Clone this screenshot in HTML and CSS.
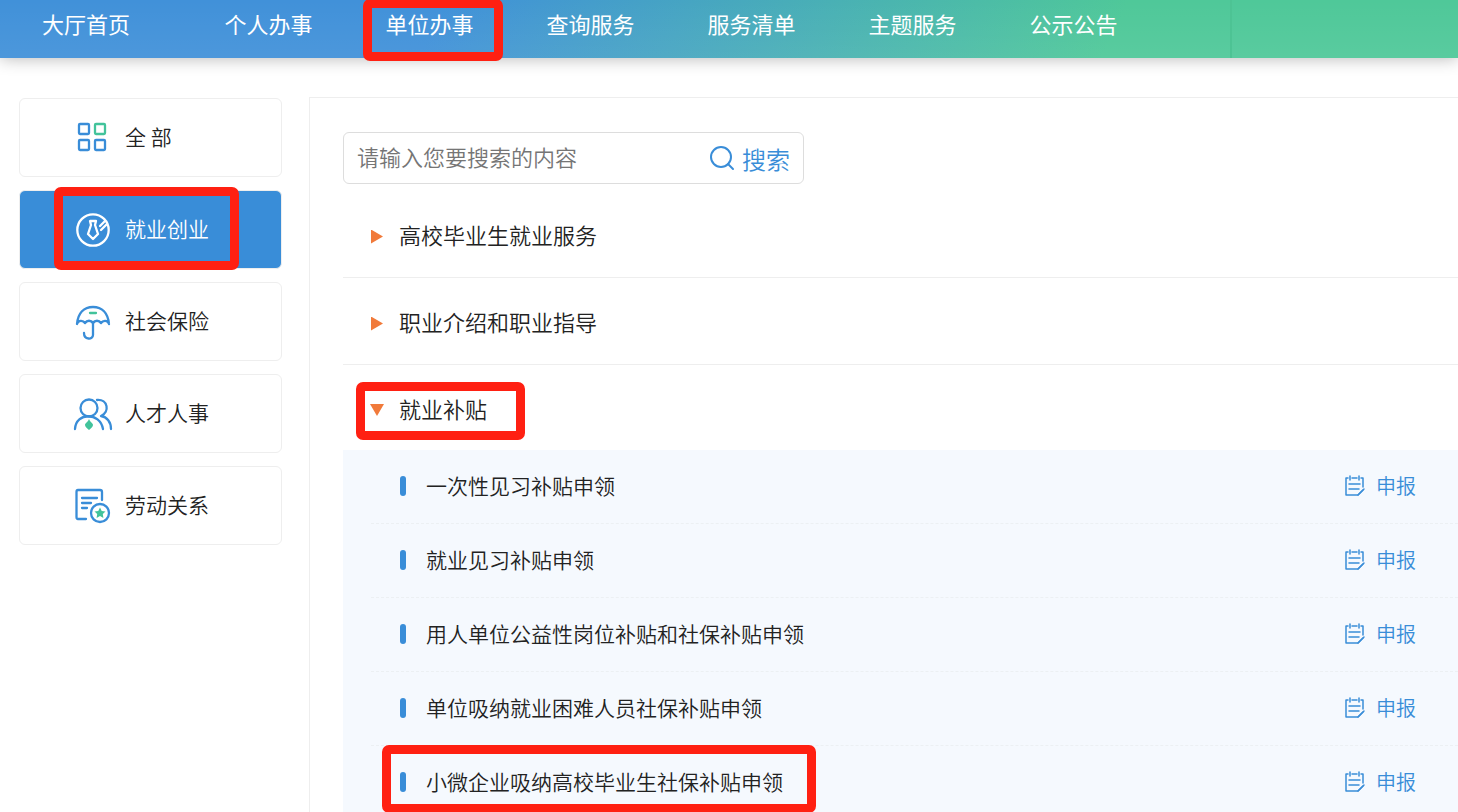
FILE: index.html
```
<!DOCTYPE html>
<html lang="zh-CN">
<head>
    <meta charset="UTF-8">
    <meta name="viewport" content="width=device-width, initial-scale=1.0">
    <title>单位办事 - 就业创业</title>
    <link rel="stylesheet" href="styles.css">
</head>
<body>
    <svg class="sprite" aria-hidden="true">
        <symbol id="icon-form" viewBox="0 0 22 22">
            <path d="M4 3H2v17h12l5-5M17 3h2v9M8 3h5" />
            <path d="M6 1v4M15 1v4M5 9h11M5 14h10M14 20l6-6" />
        </symbol>
    </svg>

    <header class="header">
        <nav class="nav">
            <a class="nav-home" href="#">大厅首页</a>
            <a class="nav-link" href="#">个人办事</a>
            <a class="nav-link" href="#">单位办事<span class="mark mark-nav"></span></a>
            <a class="nav-link" href="#">查询服务</a>
            <a class="nav-link" href="#">服务清单</a>
            <a class="nav-link" href="#">主题服务</a>
            <a class="nav-link" href="#">公示公告</a>
        </nav>
        <div class="header-side"></div>
    </header>

    <div class="layout">
        <aside class="sidebar">
            <a class="side-item" href="#">
                <svg viewBox="0 0 40 40" aria-hidden="true">
                    <rect x="6" y="6" width="10" height="10" rx="1" />
                    <rect class="green" x="22" y="6" width="10" height="10" rx="1" />
                    <rect x="6" y="22" width="10" height="10" rx="1" />
                    <rect x="22" y="22" width="10" height="10" rx="1" />
                </svg>
                <span>全 部</span>
            </a>
            <a class="side-item active" href="#">
                <svg viewBox="0 0 40 40" aria-hidden="true">
                    <circle cx="20" cy="20" r="15.7" />
                    <path d="M17 11h6l-1 4 3 9-5 5-5-5 3-9zM27 16l5-5M28 20l6-6" />
                </svg>
                <span>就业创业</span>
                <span class="mark mark-side"></span>
            </a>
            <a class="side-item" href="#">
                <svg viewBox="0 0 40 40" aria-hidden="true">
                    <path d="M4 22C5 11 11 5 20 5s15 6 16 17c-1-4-6-4-8-1-2-3-6-3-8 0-2-3-6-3-8 0-2-3-7-3-8 1z" />
                    <path d="M20 20v13c0 5-9 5-9-2" />
                    <path class="green" d="M17 11h6" />
                </svg>
                <span>社会保险</span>
            </a>
            <a class="side-item" href="#">
                <svg viewBox="0 0 40 40" aria-hidden="true">
                    <circle cx="16" cy="14" r="8.5" />
                    <path d="M2 35C3 18 27 18 30 35M24 6c11-1 13 12 4 16 6 1 10 6 10 13" />
                    <path class="green-fill" d="M16 25c1 3 4 4 4 6s-2 3-4 5c-2-2-4-3-4-5s3-3 4-6z" />
                </svg>
                <span>人才人事</span>
            </a>
            <a class="side-item" href="#">
                <svg viewBox="0 0 40 40" aria-hidden="true">
                    <path d="M29 14V6c0-1-1-2-2-2H5C4 4 3.500 5 3.500 6v25c0 1 .5 2 1.500 2h8M9 12h15M9 17h9M9 22h5" />
                    <circle cx="27" cy="27" r="9" />
                    <path class="green-fill" d="M27 21.500l1.700 3.400 3.800.5-2.700 2.700.6 3.800-3.400-1.800-3.400 1.800.6-3.800-2.700-2.700 3.800-.5z" />
                </svg>
                <span>劳动关系</span>
            </a>
        </aside>

        <main class="content">
            <form class="search">
                <input type="text" aria-label="搜索内容" placeholder="请输入您要搜索的内容">
                <button type="button">
                    <svg viewBox="0 0 26 26" aria-hidden="true">
                        <circle cx="12" cy="12" r="10" />
                        <path d="M19 19l5 5" />
                    </svg>
                    搜索
                </button>
            </form>

            <button type="button" class="group"><i class="arrow"></i><span>高校毕业生就业服务</span></button>
            <button type="button" class="group"><i class="arrow"></i><span>职业介绍和职业指导</span></button>
            <button type="button" class="group open"><i class="arrow arrow-down"></i><span>就业补贴</span><span class="mark mark-group"></span></button>

            <ul class="list">
                <li>
                    <span class="name">一次性见习补贴申领</span>
                    <a class="apply" href="#"><svg aria-hidden="true"><use href="#icon-form" /></svg>申报</a>
                </li>
                <li>
                    <span class="name">就业见习补贴申领</span>
                    <a class="apply" href="#"><svg aria-hidden="true"><use href="#icon-form" /></svg>申报</a>
                </li>
                <li>
                    <span class="name">用人单位公益性岗位补贴和社保补贴申领</span>
                    <a class="apply" href="#"><svg aria-hidden="true"><use href="#icon-form" /></svg>申报</a>
                </li>
                <li>
                    <span class="name">单位吸纳就业困难人员社保补贴申领</span>
                    <a class="apply" href="#"><svg aria-hidden="true"><use href="#icon-form" /></svg>申报</a>
                </li>
                <li>
                    <span class="name">小微企业吸纳高校毕业生社保补贴申领</span>
                    <a class="apply" href="#"><svg aria-hidden="true"><use href="#icon-form" /></svg>申报</a>
                    <span class="mark mark-row"></span>
                </li>
            </ul>
        </main>
    </div>
</body>
</html>
```
FILE: styles.css
```
:root {
    --blue: #398dd8;
    --green: #42c39b;
    --orange: #f17a3a;
    --red: #ff2012;
    --line: #eeeeee;
    --text: #222;
}

* {
    box-sizing: border-box;
}

body {
    margin: 0;
    background: #fff;
    color: var(--text);
    font-family: "Noto Sans CJK SC", "Liberation Sans", sans-serif;
    font-weight: 350;
    overflow-x: hidden;
}

a {
    color: inherit;
    text-decoration: none;
}

button,
input {
    font: inherit;
    color: inherit;
    background: none;
    border: none;
    padding: 0;
}

button {
    cursor: pointer;
}

svg {
    fill: none;
    stroke: var(--blue);
    stroke-width: 2;
    stroke-linecap: round;
    stroke-linejoin: round;
}

.sprite {
    display: none;
}

.green {
    stroke: var(--green);
}

.green-fill {
    fill: var(--green);
    stroke: none;
}

/* header */
.header {
    display: flex;
    height: 58px;
    background:
        linear-gradient(rgba(255, 255, 255, 0), rgba(255, 255, 255, 0.06)),
        linear-gradient(115deg, #4191d9 30%, #4fc899 76%);
    box-shadow: 0 0 16px rgba(0, 0, 0, 0.3);
}

.nav {
    display: flex;
    flex: 1;
    font-size: 22px;
    font-weight: 400;
    line-height: 46px;
    color: #fff;
}

.nav-home {
    width: 188px;
    padding-left: 42px;
}

.nav-link {
    position: relative;
    width: 161px;
    text-align: center;
}

.header-side {
    width: 228px;
    border-left: 2px solid #4dc394;
}

/* red frames over the highlighted steps */
.mark {
    position: absolute;
    z-index: 2;
    border: 9px solid var(--red);
    border-radius: 7px;
    pointer-events: none;
}

.mark-nav {
    inset: -1px 7px -3px 14px;
}

.mark-side {
    inset: -4px 42px -2px 34px;
}

.mark-group {
    left: 13px;
    top: 17px;
    width: 169px;
    height: 58px;
}

.mark-row {
    left: 11px;
    top: -1px;
    width: 434px;
    height: 68px;
}

/* layout */
.layout {
    display: flex;
    gap: 27px;
    padding: 39px 0 0 19px;
}

.sidebar {
    display: flex;
    flex-direction: column;
    gap: 13px;
    width: 263px;
    padding-top: 1px;
}

.side-item {
    position: relative;
    display: flex;
    align-items: center;
    gap: 12px;
    height: 79px;
    padding-left: 53px;
    border: 1px solid var(--line);
    border-radius: 6px;
    font-size: 21px;
}

.side-item svg {
    width: 40px;
    height: 40px;
    stroke-width: 2.3;
}

.side-item > span:not(.mark) {
    padding-bottom: 4px;
}

.side-item.active {
    background: var(--blue);
    color: #fff;
}

.active svg {
    stroke: #fff;
}

.content {
    flex: 1;
    padding: 34px 0 0 33px;
    border: solid var(--line);
    border-width: 1px 0 0 1px;
}

.search {
    display: flex;
    width: 461px;
    height: 52px;
    margin-bottom: 7px;
    padding: 0 13px;
    border: 1px solid #ddd;
    border-radius: 6px;
}

.search input {
    flex: 1;
    min-width: 0;
    padding-bottom: 4px;
    font-size: 22px;
    outline: none;
}

.search input::placeholder {
    color: #757575;
}

.search button {
    display: flex;
    align-items: center;
    gap: 7px;
    font-size: 24px;
    color: var(--blue);
}

.search svg {
    width: 26px;
    height: 26px;
}

/* groups */
.group {
    position: relative;
    display: flex;
    align-items: center;
    width: 100%;
    height: 87px;
    padding: 5px 0 0 26px;
    border-bottom: 1px solid var(--line);
    font-size: 22px;
}

.group > span:not(.mark) {
    padding-bottom: 5px;
}

.group.open {
    height: 85px;
    border-bottom: none;
}

.arrow {
    width: 16px;
    height: 14px;
    margin-right: 14px;
    background: var(--orange);
    clip-path: polygon(2px 0, 14px 50%, 2px 100%);
}

.arrow-down {
    height: 12px;
    clip-path: polygon(1px 0, 15px 0, 50% 100%);
}

/* list */
.list {
    margin: 0;
    padding: 0 0 0 28px;
    list-style: none;
    background: #f5f9fe;
}

.list li {
    position: relative;
    display: flex;
    align-items: center;
    height: 74px;
    padding: 0 42px 2px 29px;
    border-bottom: 1px dashed #ecf0f3;
}

.list li::before {
    content: "";
    width: 6px;
    height: 20px;
    margin-right: 20px;
    border-radius: 3px;
    background: var(--blue);
}

.name {
    flex: 1;
    padding-bottom: 2px;
    font-size: 21px;
}

.apply {
    display: flex;
    align-items: center;
    gap: 10px;
    font-size: 20px;
    color: var(--blue);
}

.apply svg {
    width: 22px;
    height: 22px;
    stroke-width: 1.5;
}
```
